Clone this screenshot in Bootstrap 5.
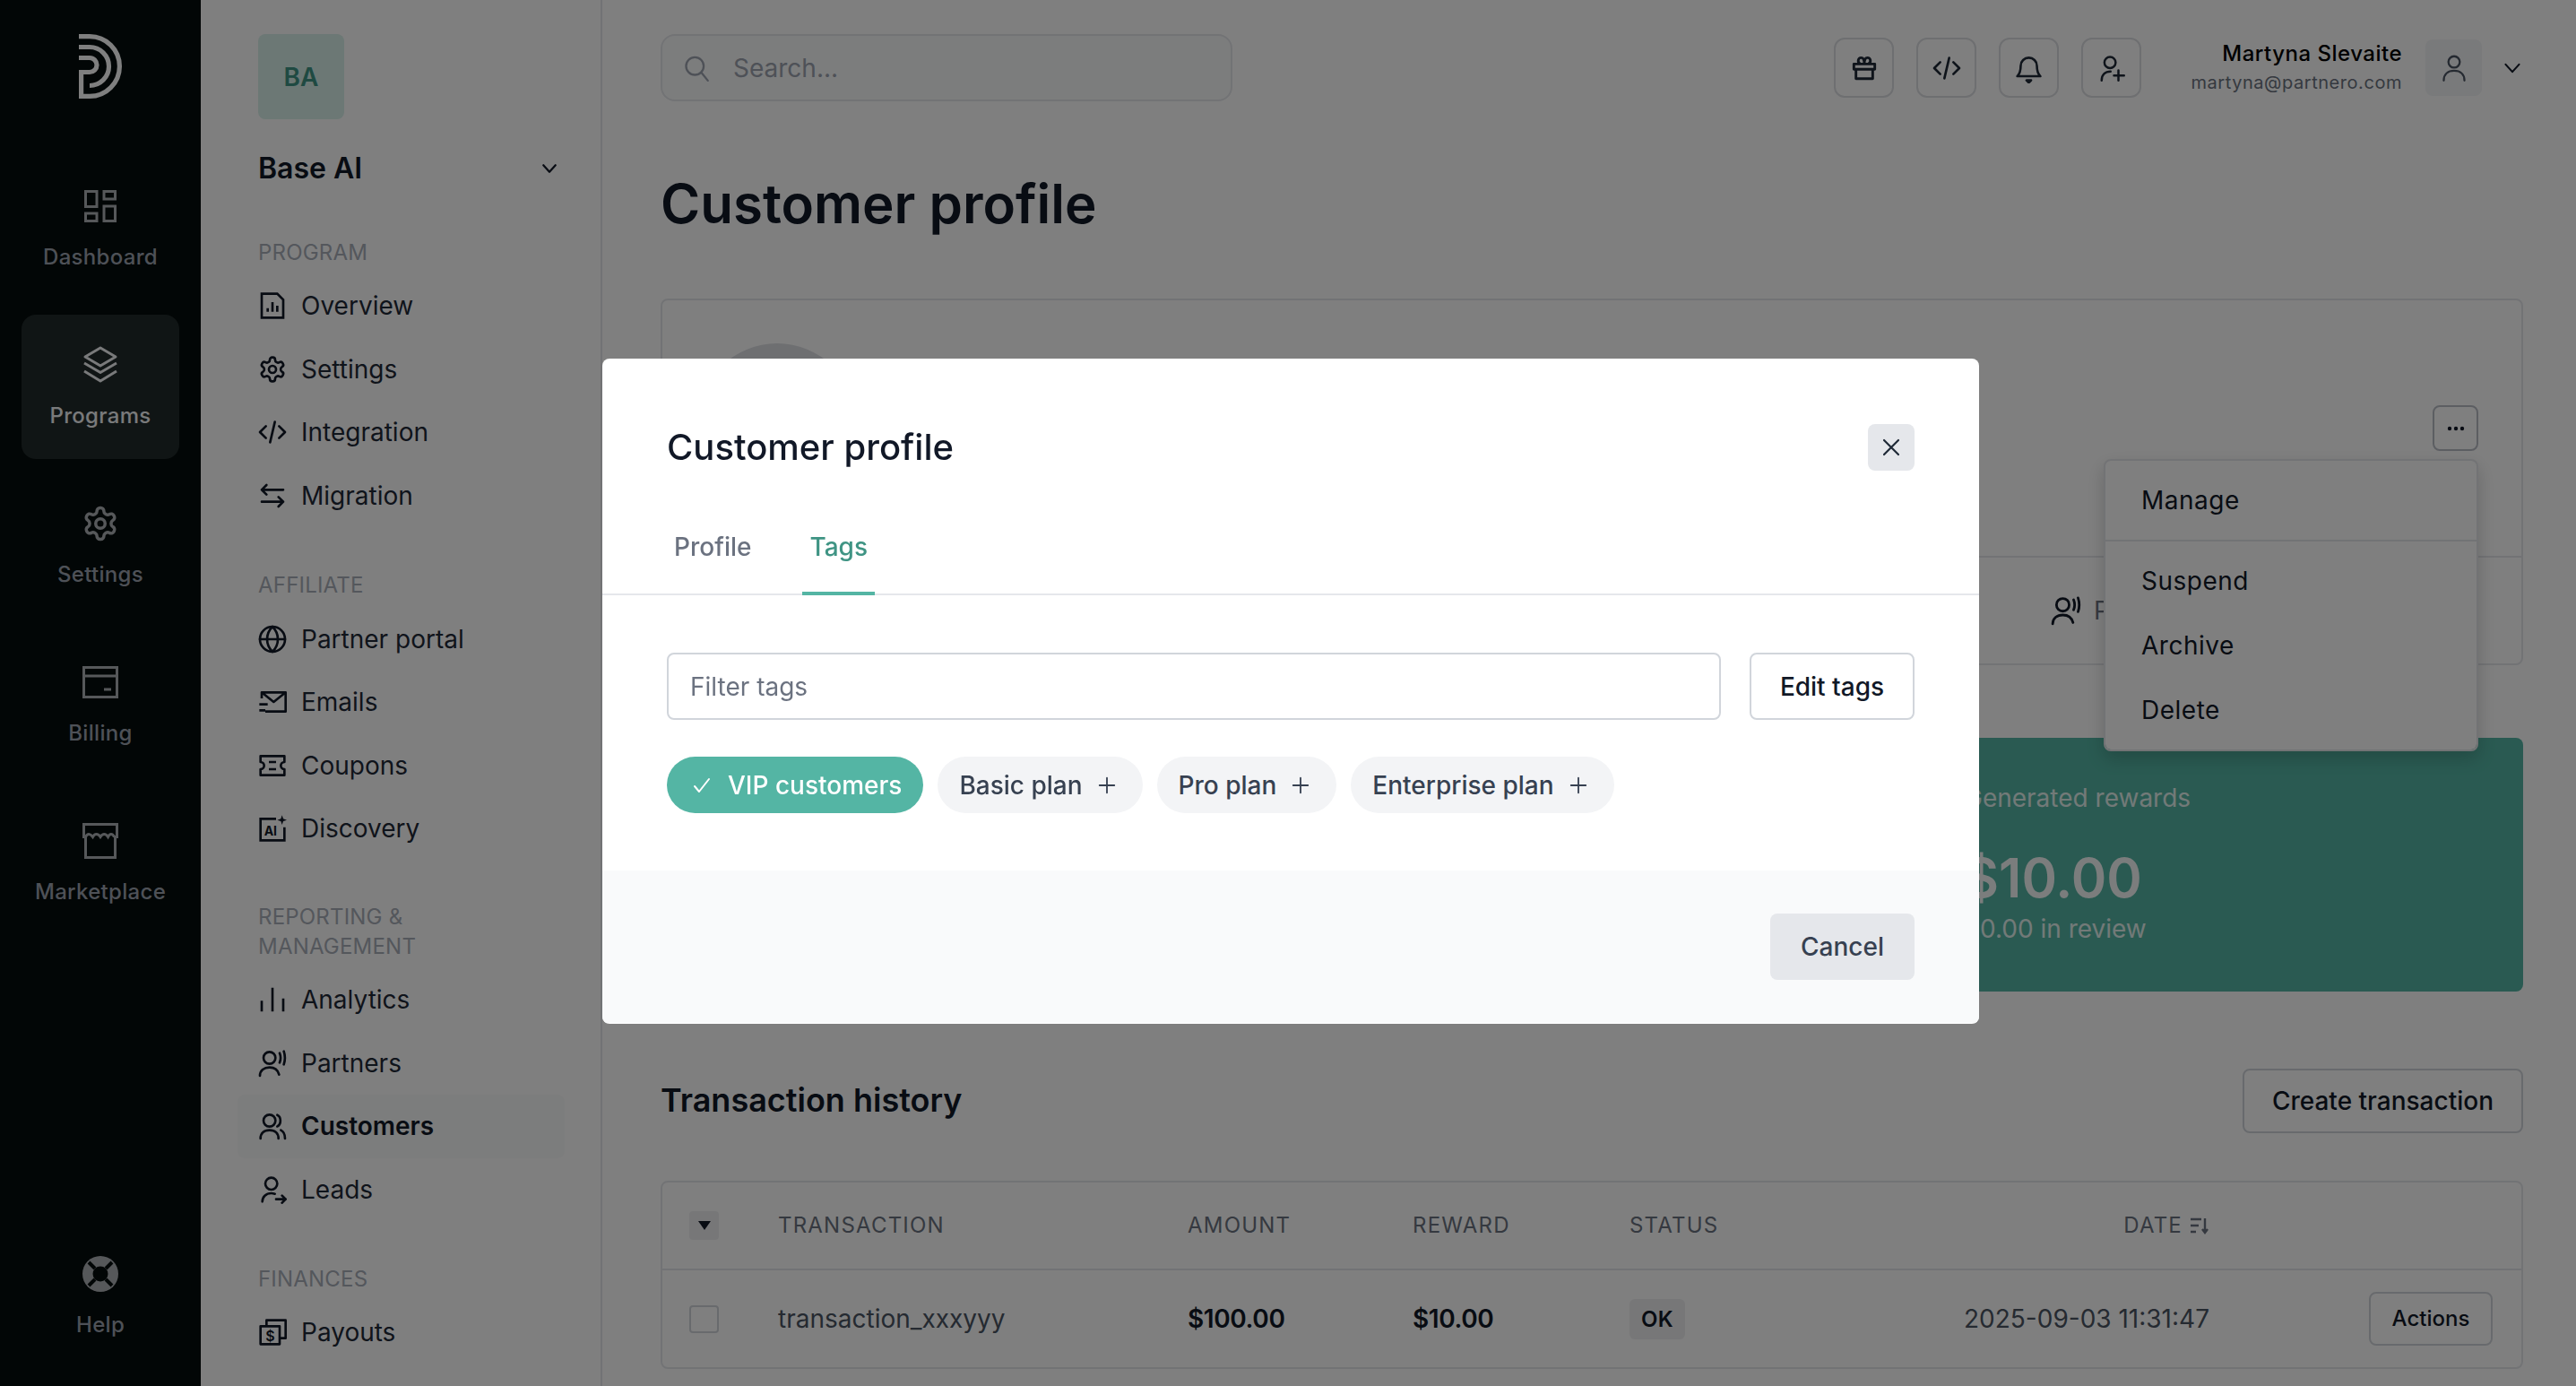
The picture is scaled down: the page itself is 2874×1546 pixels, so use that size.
<!DOCTYPE html>
<html lang="en">
  <head>
    <meta charset="UTF-8" />
    <meta name="viewport" content="width=device-width, initial-scale=1.0" />
    <title>Customer profile</title>
    <link href="https://cdn.jsdelivr.net/npm/bootstrap@5.3.0/dist/css/bootstrap.min.css" rel="stylesheet" />
    <style>
      html, body { height: 100%; overflow: hidden; }
      body { font-family: Inter, "Liberation Sans", sans-serif; font-size: 28px; color: #111827; background: #fff; }
      svg { display: block; flex-shrink: 0; }
      .ico { fill: none; stroke: currentColor; stroke-width: 2; stroke-linecap: round; stroke-linejoin: round; }

      .app-shell { display: flex; height: 1546px; overflow: hidden; }

      /* dark rail */
      .rail { width: 224px; flex-shrink: 0; background: #050c0c; display: flex; flex-direction: column; align-items: center; gap: 16px; padding: 38px 24px 20px; }
      .rail-logo { height: 120px; margin-bottom: 0; color: #fff; }
      .rail-link { width: 176px; height: 161px; border-radius: 16px; display: flex; flex-direction: column; align-items: center; color: #9ca3af; padding-top: 34px; text-decoration: none; font-size: 24px; font-weight: 500; letter-spacing: .3px; }
      .rail-link .rail-ico { height: 44px; display: flex; align-items: center; color: #adb1b5; }
      .rail-link span { margin-top: 18px; line-height: 34px; }
      .rail-link.current { background: #202a2a; color: #f3f4f6; }
      .rail-link.current .rail-ico { color: #f3f4f6; }

      /* second sidebar */
      .side { width: 448px; flex-shrink: 0; border-right: 2px solid #e5e7eb; padding: 38px 40px 0 64px; background: #fff; }
      .org-badge { width: 96px; height: 95px; border-radius: 8px; background: #d8f0ea; color: #3f9484; font-size: 28px; font-weight: 600; display: flex; align-items: center; justify-content: center; }
      .org-row { display: flex; align-items: center; justify-content: space-between; height: 44px; margin-top: 33px; font-size: 32px; font-weight: 600; padding-right: 8px; }
      .side-label { color: #a8aeb9; font-size: 24px; line-height: 33px; margin: 48px 0 8px; text-transform: uppercase; letter-spacing: .2px; }
      .org-row + .side-label { margin-top: 55px; }
      .side-label.tight { margin-top: 46px; }
      .side-link { display: flex; align-items: center; gap: 16px; height: 70.6px; margin: 0 0 0 -23px; padding-left: 23px; border-radius: 8px; color: #1f2937; text-decoration: none; }
      .side-link svg { width: 32px; height: 32px; color: #111827; }
      .side-link.current { background: #f9fafb; font-weight: 600; color: #111827; width: 365px; }

      /* main column */
      .main-col { flex: 1; min-width: 0; padding: 38px 59px 0 65px; }
      .top-row { display: flex; align-items: center; justify-content: space-between; height: 75px; }
      .search-box { width: 638px; height: 75px; border: 2px solid #e5e7eb; border-radius: 16px; background: #f9fafb; display: flex; align-items: center; gap: 27px; padding-left: 24px; color: #9ca3af; }
      .top-tools { display: flex; align-items: center; }
      .tool-btn { width: 67px; height: 67px; border: 2px solid #dcdee2; border-radius: 12px; background: #fff; margin-right: 25px; display: flex; align-items: center; justify-content: center; color: #1f2937; padding: 0; }
      .user-text { text-align: right; margin-left: 55px; }
      .user-name { font-size: 24px; font-weight: 500; line-height: 32px; color: #000; letter-spacing: .5px; }
      .user-mail { font-size: 20px; line-height: 32px; color: #6b7280; letter-spacing: .55px; }
      .user-pic { width: 63px; height: 63px; border-radius: 8px; background: #f3f4f6; margin-left: 26px; display: flex; align-items: center; justify-content: center; color: #4b5563; }
      .chev-end { margin-left: 24px; margin-right: 2px; stroke-width: 2.5; }
      .page-title { font-size: 60px; font-weight: 600; line-height: 76px; margin: 76px 0 68px; color: #111827; }

      .profile-box { height: 409px; border: 2px solid #e5e7eb; border-radius: 8px; position: relative; }
      .profile-top { height: 287px; border-bottom: 2px solid #e5e7eb; padding: 48px 48px 0 40px; display: flex; justify-content: space-between; align-items: flex-start; }
      .face-circle { width: 176px; height: 176px; border-radius: 50%; background: #dcdee3; }
      .dots-btn { width: 51px; height: 51px; margin-top: 69px; border: 2px solid #b9bdc5; border-radius: 8px; background: #fff; display: flex; align-items: center; justify-content: center; padding: 0; color: #111827; }
      .profile-tabs { height: 118px; display: flex; justify-content: flex-end; align-items: center; }
      .profile-tab { width: 525px; display: flex; align-items: center; gap: 14px; color: #6b7280; padding-bottom: 0; }
      .profile-tab svg { width: 34px; height: 34px; color: #111827; }
      .act-menu { display: block; top: 177px; right: 48px; left: auto; width: 418px; border: 2px solid #e5e7eb; border-radius: 8px; padding: 8px 0; box-shadow: 0 8px 20px rgba(0,0,0,.18); }
      .act-menu .dropdown-item { height: 72px; display: flex; align-items: center; padding: 0 40px; font-size: 28px; letter-spacing: .5px; color: #111827; }
      .act-menu .dropdown-divider { border-top: 2px solid #e5e7eb; opacity: 1; }

      .reward-row { display: flex; justify-content: flex-end; margin-top: 81px; }
      .reward-box { width: 695px; height: 283px; background: #54b5a4; border-radius: 8px; color: #fff; padding: 49px 68px 50px 71px; }
      .reward-label { font-size: 28px; line-height: 36px; opacity: .85; }
      .reward-sum { font-size: 60px; font-weight: 600; line-height: 76px; margin-top: 33px; opacity: .95; }
      .reward-note { font-size: 28px; line-height: 36px; margin-top: 1px; opacity: .85; }

      .section-row { display: flex; align-items: center; justify-content: space-between; margin-top: 86px; height: 72px; }
      .section-title { font-size: 36px; font-weight: 600; margin: 0; color: #111827; }
      .line-btn { border: 2px solid #d1d5db; border-radius: 8px; background: #fff; color: #111827; font-size: 28px; font-weight: 500; height: 72px; padding: 0 31px; }

      .tx-box { margin-top: 53px; height: 210px; border: 2px solid #e5e7eb; border-radius: 8px; }
      .tx-table { table-layout: fixed; width: 100%; margin: 0; --bs-table-bg: transparent; }
      .tx-table th { height: 97px; font-size: 24px; font-weight: 400; letter-spacing: 1.2px; color: #6b7280; vertical-align: middle; padding: 0; border-bottom: 2px solid #e5e7eb; }
      .tx-table td { height: 109px; vertical-align: middle; padding: 0; border: 0; font-size: 28px; color: #4b5563; }
      .tx-table .cell-check { padding-left: 30px; }
      .tx-table .money { color: #111827; font-weight: 600; letter-spacing: -.4px; }
      .caret-box { width: 33px; height: 32px; border-radius: 4px; background: #eeeff1; display: flex; align-items: center; justify-content: center; color: #111827; }
      .row-check { width: 33px; height: 31px; border: 2px solid #d1d5db; border-radius: 4px; }
      .ok-chip { display: inline-block; background: #eeeff1; border-radius: 6px; font-size: 24px; font-weight: 600; line-height: 45px; padding: 0 13px; color: #111827; letter-spacing: .3px; }
      .row-btn { border: 2px solid #d1d5db; border-radius: 8px; background: #fff; color: #111827; font-size: 24px; font-weight: 500; height: 60px; width: 138px; padding: 0; }

      /* modal */
      .tag-dialog { max-width: none !important; width: 1536px; margin: 400px 0 0 672px !important; }
      .tag-dialog .modal-content { border: 0; border-radius: 8px; height: 742px; overflow: hidden; }
      .tag-head { padding: 73px 72px 0 72px; }
      .tag-head-row { display: flex; align-items: center; justify-content: space-between; height: 52px; }
      .tag-title { font-size: 40px; font-weight: 500; margin: 0; color: #111827; line-height: 52px; }
      .tag-close { width: 52px; height: 52px; border: 0; border-radius: 8px; background: #e5e7eb; display: flex; align-items: center; justify-content: center; padding: 0; color: #1f2937; }
      .tag-tabs { margin-top: 47px; border-bottom: 2px solid #e5e7eb; padding-left: 71px; gap: 48px; --bs-nav-tabs-border-width: 0; }
      .tag-tabs .nav-link { font-size: 28px; font-weight: 500; line-height: 34px; padding: 21px 9px 33px; color: #6b7280; border: 0; border-bottom: 4px solid transparent; border-radius: 0; margin-bottom: -2px; background: none; }
      .tag-tabs .nav-link.active { color: #3f9484; border-bottom-color: #54b5a4; padding-left: 8px; padding-right: 8px; }
      .tag-body { padding: 64px 72px 64px 72px; }
      .tag-filter { display: flex; gap: 32px; }
      .tag-filter .form-control { height: 75px; border: 2px solid #d1d5db; border-radius: 8px; font-size: 28px; padding: 0 24px; }
      .tag-filter .form-control::placeholder { color: #6b7280; }
      .edit-btn { flex-shrink: 0; width: 184px; height: 75px; border: 2px solid #d1d5db; border-radius: 8px; background: #fff; font-size: 28px; font-weight: 500; color: #111827; padding: 0; }
      .chip-row { display: flex; gap: 16px; margin-top: 41px; }
      .tag-chip { display: flex; align-items: center; height: 63px; border-radius: 32px; background: #f3f4f6; color: #374151; font-size: 28px; font-weight: 500; padding: 0 29px 0 24px; gap: 16px; }
      .tag-chip.chosen { background: #54b5a4; color: #fff; gap: 17px; padding: 0 24px 0 27px; }
      .tag-foot { background: #f9fafb; padding: 48px 72px; height: 170px; display: flex; justify-content: flex-end; }
      .cancel-btn { width: 161px; height: 74px; border: 0; border-radius: 8px; background: #e5e7eb; color: #374151; font-size: 28px; font-weight: 500; padding: 0; }
    </style>
  </head>
  <body>
    <!-- shared icons -->
    <svg width="0" height="0" style="position:absolute">
      <symbol id="i-gear" viewBox="0 0 24 24"><path d="M12.22 2h-.44a2 2 0 0 0-2 2v.18a2 2 0 0 1-1 1.73l-.43.25a2 2 0 0 1-2 0l-.15-.08a2 2 0 0 0-2.73.73l-.22.38a2 2 0 0 0 .73 2.73l.15.1a2 2 0 0 1 1 1.72v.51a2 2 0 0 1-1 1.74l-.15.09a2 2 0 0 0-.73 2.73l.22.38a2 2 0 0 0 2.73.73l.15-.08a2 2 0 0 1 2 0l.43.25a2 2 0 0 1 1 1.73V20a2 2 0 0 0 2 2h.44a2 2 0 0 0 2-2v-.18a2 2 0 0 1 1-1.73l.43-.25a2 2 0 0 1 2 0l.15.08a2 2 0 0 0 2.73-.73l.22-.39a2 2 0 0 0-.73-2.73l-.15-.08a2 2 0 0 1-1-1.74v-.5a2 2 0 0 1 1-1.74l.15-.09a2 2 0 0 0 .73-2.73l-.22-.38a2 2 0 0 0-2.73-.73l-.15.08a2 2 0 0 1-2 0l-.43-.25a2 2 0 0 1-1-1.73V4a2 2 0 0 0-2-2z"/><circle cx="12" cy="12" r="3"/></symbol>
      <symbol id="i-code" viewBox="0 0 24 24"><path d="M6.5 7 1.5 12l5 5M17.5 7l5 5-5 5M14 3.5 10 20.5"/></symbol>
      <symbol id="i-partner" viewBox="0 0 24 24"><circle cx="9.5" cy="7.5" r="5"/><path d="M1.5 22.5c0-4.5 3.500-7 8-7s7 2 8 6M18 3.500c1 2.500 1 5.500 0 8M21.500 2c1 3 1 8 0 11"/></symbol>
      <symbol id="i-check" viewBox="0 0 24 24"><path d="M4 13l5 6L20 5"/></symbol>
      <symbol id="i-plus" viewBox="0 0 24 24"><path d="M12 3v18M3 12h18"/></symbol>
      <symbol id="i-chev" viewBox="0 0 24 24"><path d="M3 7l9 10 9-10"/></symbol>
    </svg>

    <div class="app-shell">
      <nav class="rail">
        <div class="rail-logo">
          <svg width="48" height="72" viewBox="0 0 48 72" fill="none" stroke="currentColor" stroke-width="5.200">
            <path d="M0 2.600H12A33.400 33.400 0 0 1 12 69.400H2.600V41.500"/>
            <path d="M0 14.500H12A21.500 21.500 0 0 1 12 57.500"/>
            <path d="M0 26.500H12A8 8 0 0 1 12 42.500H0"/>
          </svg>
        </div>
        <a class="rail-link" href="#">
          <div class="rail-ico">
            <svg width="36" height="36" viewBox="0 0 36 36" fill="none" stroke="currentColor" stroke-width="3"><rect x="1.500" y="1.500" width="12.500" height="17"/><rect x="22" y="1.500" width="12.500" height="8.500"/><rect x="1.500" y="26" width="12.500" height="8.500"/><rect x="22" y="18" width="12.500" height="16.500"/></svg>
          </div>
          <span>Dashboard</span>
        </a>
        <a class="rail-link current" href="#">
          <div class="rail-ico">
            <svg width="40" height="42" viewBox="0 0 40 42" class="ico" style="stroke-width:3;stroke-linecap:butt"><path d="M20 2 37 12 20 22 3 12zM2 19l18 10.500L38 19M2 28l18 11 18-11"/></svg>
          </div>
          <span>Programs</span>
        </a>
        <a class="rail-link" href="#">
          <div class="rail-ico">
            <svg width="42" height="42" class="ico" style="stroke-width:2"><use href="#i-gear"/></svg>
          </div>
          <span>Settings</span>
        </a>
        <a class="rail-link" href="#">
          <div class="rail-ico">
            <svg width="40" height="36" viewBox="0 0 40 36" fill="none" stroke="currentColor" stroke-width="3"><rect x="1.500" y="1.500" width="37" height="33"/><path d="M1.500 11h37M24 26h8"/></svg>
          </div>
          <span>Billing</span>
        </a>
        <a class="rail-link" href="#">
          <div class="rail-ico">
            <svg width="40" height="40" viewBox="0 0 40 40" fill="none" stroke="currentColor" stroke-width="3"><path d="M1.500 1.500h37v14h-2V38.500h-33V15.500h-2zM3.500 15.500c2-4 5-4 8 0 2-4 6-4 8.500 0 2.500-4 6-4 8.500 0 2-4 5-4 7 0"/></svg>
          </div>
          <span>Marketplace</span>
        </a>
        <a class="rail-link mt-auto" href="#">
          <div class="rail-ico">
            <svg width="40" height="40" viewBox="0 0 40 40"><circle cx="20" cy="20" r="20" fill="currentColor"/><circle cx="20" cy="20" r="8.500" fill="#050c0c"/><path d="M7 7l7 7M33 7l-7 7M7 33l7-7M33 33l-7-7" stroke="#050c0c" stroke-width="4"/></svg>
          </div>
          <span>Help</span>
        </a>
      </nav>

      <aside class="side">
        <div class="org-badge">BA</div>
        <div class="org-row">
          <span>Base AI</span>
          <svg width="18" height="18" class="ico" style="stroke-width:3"><use href="#i-chev"/></svg>
        </div>
        <div class="side-label">Program</div>
        <a class="side-link" href="#">
          <svg viewBox="0 0 24 24" class="ico"><path d="M3 2h13l5 5v15H3zM8 17v-3M12 17V9M16 17v-5" stroke-linecap="butt" stroke-linejoin="miter"/></svg>
          Overview
        </a>
        <a class="side-link" href="#"><svg class="ico"><use href="#i-gear"/></svg>Settings</a>
        <a class="side-link" href="#"><svg class="ico"><use href="#i-code"/></svg>Integration</a>
        <a class="side-link" href="#">
          <svg viewBox="0 0 24 24" class="ico"><path d="M7 3 3 7l4 4M3 7h18M17 13l4 4-4 4M21 17H3"/></svg>
          Migration
        </a>
        <div class="side-label">Affiliate</div>
        <a class="side-link" href="#">
          <svg viewBox="0 0 24 24" class="ico"><circle cx="12" cy="12" r="10.500"/><path d="M1.500 12h21M12 1.500c-6 6-6 15 0 21M12 1.500c6 6 6 15 0 21"/></svg>
          Partner portal
        </a>
        <a class="side-link" href="#">
          <svg viewBox="0 0 24 24" class="ico"><path d="M3 9V4h20v16H6M3 4l10 8 10-8M1 14h7M1 19h5" stroke-linecap="butt"/></svg>
          Emails
        </a>
        <a class="side-link" href="#">
          <svg viewBox="0 0 24 24" class="ico"><path d="M2 4h20v5a3 3 0 0 0 0 6v5H2v-5a3 3 0 0 0 0-6zM9 9h6M9 15h6" stroke-linecap="butt"/></svg>
          Coupons
        </a>
        <a class="side-link" href="#">
          <svg viewBox="0 0 24 24" class="ico"><path d="M15 4H2v18h20V11" stroke-linecap="butt" stroke-linejoin="miter"/><text x="5" y="18" font-size="10.500" font-weight="700" fill="currentColor" stroke="none" font-family="Inter, sans-serif">AI</text><path d="M20 1l1 3 3 1-3 1-1 3-1-3-3-1 3-1z" fill="currentColor" stroke="none"/></svg>
          Discovery
        </a>
        <div class="side-label tight">Reporting &amp;<br />Management</div>
        <a class="side-link" href="#">
          <svg viewBox="0 0 24 24" class="ico"><path d="M3 22v-9M12 22V2M21 22V11" stroke-linecap="butt"/></svg>
          Analytics
        </a>
        <a class="side-link" href="#"><svg class="ico"><use href="#i-partner"/></svg>Partners</a>
        <a class="side-link current" href="#">
          <svg viewBox="0 0 24 24" class="ico"><circle cx="9.500" cy="7.500" r="5"/><path d="M2 22.500c0-4.500 3-7 7.500-7s7.500 2.500 7.500 7M16 2.800c3.500 1.500 3.500 8 0 9.500M19 15.500c2 1 3.500 3.500 3.500 7"/></svg>
          Customers
        </a>
        <a class="side-link" href="#">
          <svg viewBox="0 0 24 24" class="ico"><circle cx="11" cy="7" r="5"/><path d="M3.500 22c0-4 3-7 7.500-7 1 0 2 .2 3 .5M15 20h8M20 17l3 3-3 3"/></svg>
          Leads
        </a>
        <div class="side-label">Finances</div>
        <a class="side-link" href="#">
          <svg viewBox="0 0 24 24" class="ico"><path d="M7 7V2h16v15h-5" stroke-linecap="butt"/><rect x="2" y="7" width="16" height="15"/><text x="10" y="19.500" font-size="12" font-weight="600" text-anchor="middle" fill="currentColor" stroke="none" font-family="Inter, sans-serif">$</text></svg>
          Payouts
        </a>
      </aside>

      <main class="main-col">
        <div class="top-row">
          <div class="search-box">
            <svg width="28" height="30" viewBox="0 0 24 26" class="ico"><circle cx="10.500" cy="11" r="8.500"/><path d="M17 17.500 23 25"/></svg>
            <span>Search...</span>
          </div>
          <div class="top-tools">
            <button class="tool-btn" type="button">
              <svg width="28" height="28" viewBox="0 0 24 24" class="ico" style="stroke-width:2.500"><path d="M2 8h20v5H2zM4 13v9h16v-9M8 8c-3-2-2-6 1-6 2 0 3 3 3 6 0-3 1-6 3-6 3 0 4 4 1 6" stroke-linecap="butt"/></svg>
            </button>
            <button class="tool-btn" type="button"><svg width="32" height="32" class="ico"><use href="#i-code"/></svg></button>
            <button class="tool-btn" type="button">
              <svg width="31" height="34" viewBox="0 0 24 26" class="ico"><path d="M2 20c2-2 3-4 3-9a7 7 0 0 1 14 0c0 5 1 7 3 9zM10 23.500h4l-2 2z"/></svg>
            </button>
            <button class="tool-btn me-0" type="button">
              <svg width="30" height="30" viewBox="0 0 24 24" class="ico"><circle cx="10.500" cy="7" r="5"/><path d="M3 23c0-5 3-8 8-8M18 14v9M14 18.500h9"/></svg>
            </button>
            <div class="user-text">
              <div class="user-name">Martyna Slevaite</div>
              <div class="user-mail">martyna@partnero.com</div>
            </div>
            <div class="user-pic">
              <svg width="28" height="30" viewBox="0 0 24 26" class="ico"><circle cx="12" cy="7" r="5.500"/><path d="M2 25c0-6 4-9.500 10-9.500s10 3.500 10 9.500"/></svg>
            </div>
            <svg class="ico chev-end" width="20" height="20"><use href="#i-chev"/></svg>
          </div>
        </div>

        <h1 class="page-title">Customer profile</h1>

        <div class="profile-box">
          <div class="profile-top">
            <div class="face-circle"></div>
            <button class="dots-btn" type="button">
              <svg width="20" height="6" viewBox="0 0 20 6" fill="currentColor"><circle cx="3" cy="3" r="2.200"/><circle cx="10" cy="3" r="2.200"/><circle cx="17" cy="3" r="2.200"/></svg>
            </button>
          </div>
          <div class="profile-tabs">
            <div class="profile-tab"><svg class="ico"><use href="#i-partner"/></svg>Partners</div>
          </div>
          <ul class="dropdown-menu act-menu">
            <li><a class="dropdown-item" href="#">Manage</a></li>
            <li><hr class="dropdown-divider" /></li>
            <li><a class="dropdown-item" href="#">Suspend</a></li>
            <li><a class="dropdown-item" href="#">Archive</a></li>
            <li><a class="dropdown-item" href="#">Delete</a></li>
          </ul>
        </div>

        <div class="reward-row">
          <div class="reward-box">
            <div class="reward-label">Generated rewards</div>
            <div class="reward-sum">$10.00</div>
            <div class="reward-note">$0.00 in review</div>
          </div>
        </div>

        <div class="section-row">
          <h2 class="section-title">Transaction history</h2>
          <button class="line-btn" type="button">Create transaction</button>
        </div>

        <div class="tx-box">
          <table class="table tx-table">
            <colgroup><col width="129" /><col width="457" /><col width="251" /><col width="242" /><col width="300" /><col width="347" /><col /></colgroup>
            <thead>
              <tr>
                <th class="cell-check">
                  <div class="caret-box"><svg width="14" height="10" viewBox="0 0 14 10" fill="currentColor"><path d="M0 0h14L7 10z"/></svg></div>
                </th>
                <th>TRANSACTION</th>
                <th>AMOUNT</th>
                <th>REWARD</th>
                <th>STATUS</th>
                <th class="text-end">
                  <span class="d-inline-flex align-items-center gap-2">DATE
                    <svg width="22" height="20" viewBox="0 0 22 20" fill="none" stroke="currentColor" stroke-width="2.400"><path d="M1 3h12M1 10h9M1 17h6M17 2v15M14 14l3 4 3-4"/></svg>
                  </span>
                </th>
                <th></th>
              </tr>
            </thead>
            <tbody>
              <tr>
                <td class="cell-check"><div class="row-check"></div></td>
                <td>transaction_xxxyyy</td>
                <td class="money">$100.00</td>
                <td class="money">$10.00</td>
                <td><span class="ok-chip">OK</span></td>
                <td class="text-end">2025-09-03 11:31:47</td>
                <td class="text-end pe-4"><button class="row-btn me-2" type="button">Actions</button></td>
              </tr>
            </tbody>
          </table>
        </div>
      </main>
    </div>

    <div class="modal-backdrop show"></div>
    <div class="modal d-block" tabindex="-1">
      <div class="modal-dialog tag-dialog">
        <div class="modal-content">
          <div class="tag-head">
            <div class="tag-head-row">
              <h5 class="tag-title">Customer profile</h5>
              <button class="tag-close" type="button" aria-label="Close">
                <svg width="22" height="22" viewBox="0 0 22 22" class="ico" style="stroke-width:2.200"><path d="M3 3l16 16M19 3 3 19"/></svg>
              </button>
            </div>
          </div>
          <ul class="nav nav-tabs tag-tabs">
            <li class="nav-item"><a class="nav-link" href="#">Profile</a></li>
            <li class="nav-item"><a class="nav-link active" href="#">Tags</a></li>
          </ul>
          <div class="tag-body">
            <div class="tag-filter">
              <input class="form-control" type="text" placeholder="Filter tags" />
              <button class="edit-btn" type="button">Edit tags</button>
            </div>
            <div class="chip-row">
              <div class="tag-chip chosen"><svg width="24" height="24" class="ico"><use href="#i-check"/></svg>VIP customers</div>
              <div class="tag-chip">Basic plan <svg width="22" height="22" class="ico"><use href="#i-plus"/></svg></div>
              <div class="tag-chip">Pro plan <svg width="22" height="22" class="ico"><use href="#i-plus"/></svg></div>
              <div class="tag-chip">Enterprise plan <svg width="22" height="22" class="ico"><use href="#i-plus"/></svg></div>
            </div>
          </div>
          <div class="tag-foot">
            <button class="cancel-btn" type="button">Cancel</button>
          </div>
        </div>
      </div>
    </div>

    <script src="https://cdn.jsdelivr.net/npm/bootstrap@5.3.0/dist/js/bootstrap.bundle.min.js"></script>
  </body>
</html>
